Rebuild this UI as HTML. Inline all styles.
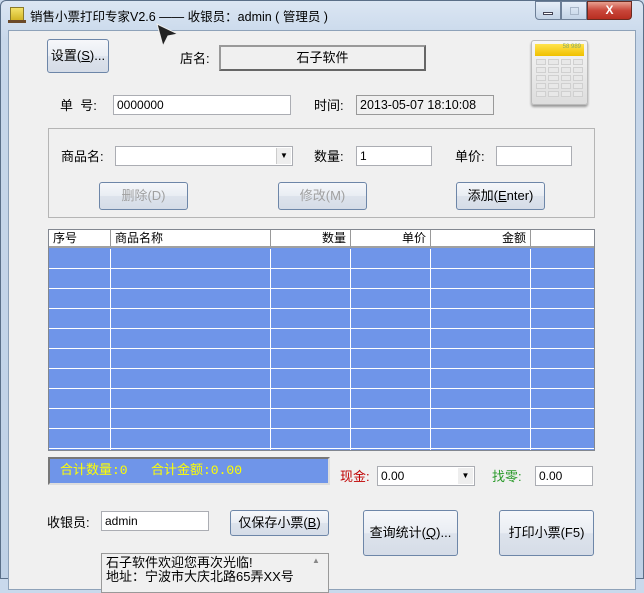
<!DOCTYPE html>
<html><head><meta charset="utf-8"><style>
*{box-sizing:border-box;margin:0;padding:0}
body{width:644px;height:579px;overflow:hidden;background:#c9d9ec;font-family:"Liberation Sans","Noto Sans CJK SC",sans-serif;font-size:12px;color:#000;position:relative}
.a{position:absolute}
.frame{left:0;top:0;width:644px;height:579px;background:linear-gradient(#dbe6f3,#c7d7ea 40px,#bfd1e6);border:1px solid #5a6f88;border-radius:6px 6px 0 0}
.client{left:8px;top:30px;width:628px;height:560px;background:#f0f0f0;border:1px solid #8ea2b9}
.btn{position:absolute;border:1px solid #6d86a8;border-radius:3px;background:linear-gradient(#f6f7fa,#e9edf3 50%,#dde3ec 51%,#d5dce7);text-align:center;font-size:13px}
.btnd{color:#a0a0a0}
.inp{position:absolute;background:#fff;border:1px solid #abadb3;height:20px;font-size:12px;padding:2px 3px;line-height:14px}
.lbl{position:absolute;font-size:13px;line-height:14px}
.grid{left:48px;top:229px;width:547px;height:222px;border:1px solid #828790;background:#6f95e9;overflow:hidden}
.hd{position:absolute;top:0;height:18px;background:#fff;border-right:1px solid #999;border-bottom:2px solid #a0a0a0;font-size:12px;line-height:17px;padding:0 4px}
.calc{display:grid;grid-template-columns:repeat(4,1fr);gap:2px;margin:3px 4px}
.calc i{display:block;height:6px;background:#e8e8e8;border:1px solid #d0d0d0}
</style></head><body>
<div class="a frame"></div>
<div class="a" style="left:10px;top:7px;width:14px;height:14px;background:linear-gradient(#f3e26a,#d2b525);border:1px solid #8a7a2a"></div>
<div class="a" style="left:8px;top:20px;width:18px;height:3px;background:#6b4a2a"></div>
<div class="a" style="left:30px;top:6px;font-size:12.5px">销售小票打印专家V2.6 —— 收银员：admin ( 管理员 )</div>
<div class="a" style="left:535px;top:1px;width:26px;height:19px;border:1px solid #6d7f97;border-radius:0 0 0 4px;background:linear-gradient(#e6eef8,#c3d3e6)"><div style="margin:10px auto 0;width:10px;height:3px;background:#fff;border:1px solid #445"></div></div>
<div class="a" style="left:561px;top:1px;width:26px;height:19px;border:1px solid #6d7f97;background:linear-gradient(#e6eef8,#c3d3e6)"><div style="margin:5px auto 0;width:9px;height:8px;border:1px solid #a8b6c8"></div></div>
<div class="a" style="left:587px;top:1px;width:45px;height:19px;border:1px solid #6b2a20;border-radius:0 0 4px 0;background:linear-gradient(#e8a090,#c9463a 50%,#b82e20);color:#fff;font-weight:bold;text-align:center;line-height:17px">X</div>
<div class="a client"></div>
<svg class="a" style="left:154px;top:22px" width="26" height="26"><path d="M3 2 L24 12 L14 14 L9 24 Z" fill="#222" stroke="#eee" stroke-width="1"/></svg>

<div class="btn" style="left:47px;top:39px;width:62px;height:34px;line-height:32px">设置(<u>S</u>)...</div>
<div class="lbl" style="left:180px;top:52px">店名:</div>
<div class="a" style="left:219px;top:45px;width:207px;height:26px;border:2px solid #999;border-right-color:#666;border-bottom-color:#666;background:#f0f0f0;text-align:center;line-height:21px;font-size:13px">石子软件</div>
<div class="a" style="left:531px;top:40px;width:57px;height:65px;border:1px solid #bbb;border-radius:3px;background:linear-gradient(#f6f6f6,#ddd);box-shadow:0 2px 2px #999">
 <div style="margin:3px 3px;height:12px;background:linear-gradient(#ffe34d,#f0c000);font-size:6px;text-align:right;padding-right:3px;color:#8a6">58 989</div>
 <div class="calc"><i></i><i></i><i></i><i></i><i></i><i></i><i></i><i></i><i></i><i></i><i></i><i></i><i></i><i></i><i></i><i></i><i></i><i></i><i></i><i></i></div>
</div>

<div class="lbl" style="left:60px;top:99px">单&nbsp;&nbsp;号:</div>
<div class="inp" style="left:113px;top:95px;width:178px">0000000</div>
<div class="lbl" style="left:314px;top:99px">时间:</div>
<div class="inp" style="left:356px;top:95px;width:138px;background:#f0f0f0;border-color:#999;font-size:12.5px">2013-05-07 18:10:08</div>

<div class="a" style="left:48px;top:128px;width:547px;height:90px;border:1px solid #b5b5b5"></div>
<div class="lbl" style="left:61px;top:150px">商品名:</div>
<div class="inp" style="left:115px;top:146px;width:178px"></div>
<div class="a" style="left:276px;top:148px;width:15px;height:16px;background:#eee;border-left:1px solid #ccc;font-size:8px;text-align:center;line-height:16px">▼</div>
<div class="lbl" style="left:314px;top:150px">数量:</div>
<div class="inp" style="left:356px;top:146px;width:76px">1</div>
<div class="lbl" style="left:455px;top:150px">单价:</div>
<div class="inp" style="left:496px;top:146px;width:76px"></div>
<div class="btn btnd" style="left:99px;top:182px;width:89px;height:28px;line-height:26px">删除(D)</div>
<div class="btn btnd" style="left:278px;top:182px;width:89px;height:28px;line-height:26px">修改(M)</div>
<div class="btn" style="left:456px;top:182px;width:89px;height:28px;line-height:26px">添加(<u>E</u>nter)</div>

<div class="a grid">
 <div class="hd" style="left:0;width:62px">序号</div>
 <div class="hd" style="left:62px;width:160px">商品名称</div>
 <div class="hd" style="left:222px;width:80px;text-align:right">数量</div>
 <div class="hd" style="left:302px;width:80px;text-align:right">单价</div>
 <div class="hd" style="left:382px;width:100px;text-align:right">金额</div>
 <div class="hd" style="left:482px;width:70px;border-right:0"></div>
 <div class="a" style="left:0;top:19px;width:547px;height:205px;background:repeating-linear-gradient(transparent 0 19px,#fff 19px 20px)"></div>
 <div class="a" style="left:61px;top:19px;width:1px;height:205px;background:#fff"></div>
 <div class="a" style="left:221px;top:19px;width:1px;height:205px;background:#fff"></div>
 <div class="a" style="left:301px;top:19px;width:1px;height:205px;background:#fff"></div>
 <div class="a" style="left:381px;top:19px;width:1px;height:205px;background:#fff"></div>
 <div class="a" style="left:481px;top:19px;width:1px;height:205px;background:#fff"></div>
</div>

<div class="a" style="left:48px;top:457px;width:282px;height:28px;background:#6f95e9;border:2px solid #777;border-right-color:#ddd;border-bottom-color:#ddd;color:#ff0;font-family:'Liberation Mono','Noto Sans CJK SC',monospace;font-size:13px;line-height:24px;padding-left:10px">合计数量:0&nbsp;&nbsp;&nbsp;合计金额:0.00</div>
<div class="lbl" style="left:340px;top:470px;color:#c00000">现金:</div>
<div class="inp" style="left:377px;top:466px;width:98px">0.00</div>
<div class="a" style="left:458px;top:468px;width:15px;height:16px;background:#eee;font-size:8px;text-align:center;line-height:16px">▼</div>
<div class="lbl" style="left:492px;top:470px;color:#2a9a2a">找零:</div>
<div class="inp" style="left:535px;top:466px;width:58px">0.00</div>

<div class="lbl" style="left:47px;top:516px">收银员:</div>
<div class="inp" style="left:101px;top:511px;width:108px">admin</div>
<div class="btn" style="left:230px;top:510px;width:99px;height:26px;line-height:24px">仅保存小票(<u>B</u>)</div>
<div class="btn" style="left:363px;top:510px;width:95px;height:46px;line-height:44px">查询统计(<u>Q</u>)...</div>
<div class="btn" style="left:499px;top:510px;width:95px;height:46px;line-height:44px">打印小票(F5)</div>
<div class="a" style="left:101px;top:553px;width:228px;height:40px;background:#f0f0f0;border:1px solid #999;font-size:13px;line-height:14px;padding:2px 4px">石子软件欢迎您再次光临!<br>地址：宁波市大庆北路65弄XX号</div>
<div class="a" style="left:312px;top:556px;font-size:8px;color:#888">▲</div>
</body></html>
